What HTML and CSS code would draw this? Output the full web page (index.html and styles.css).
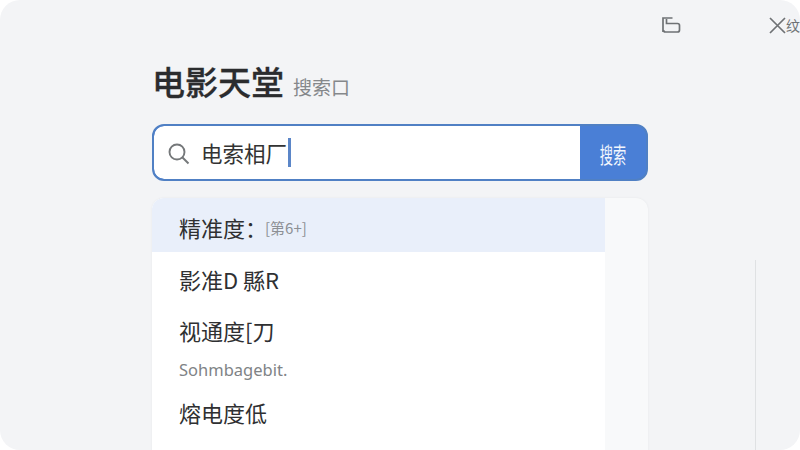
FILE: index.html
```html
<!DOCTYPE html>
<html lang="zh">
<head>
<meta charset="utf-8">
<title>电影天堂</title>
<link rel="stylesheet" href="styles.css">
</head>
<body>
<div class="window">
  <header class="topbar">
    <svg class="icon-restore" width="20" height="18" viewBox="0 0 20 18" fill="none" stroke="#6f7275" stroke-width="1.700"><path d="M2 16V2h9.500"/><path d="M5.500 3v4.500h11a2 2 0 0 1 2 2v4.500a2 2 0 0 1-2 2H4.500a2 2 0 0 1-2-2"/></svg>
    <span class="close"><svg class="close-x" width="17" height="17" viewBox="0 0 17 17" fill="none" stroke="#6f7275" stroke-width="1.700"><path d="M1 1l15 15M16 1L1 16"/></svg><span class="close-text">纹</span></span>
  </header>
  <main class="content">
    <div class="title-row">
      <h1 class="title">电影天堂</h1>
      <span class="subtitle">搜索口</span>
    </div>
    <div class="search">
      <div class="field">
        <svg class="mag" width="24" height="24" viewBox="0 0 24 24" fill="none" stroke="#75787a" stroke-width="1.900"><circle cx="10" cy="10" r="7.500"/><path d="M15.500 15.500l6 6"/></svg>
        <span class="query">电索相厂</span><span class="caret"></span>
      </div>
      <div class="btn"><span class="btn-text">搜索</span></div>
    </div>
    <div class="panel">
      <ul class="list">
        <li class="row row-active"><span class="row-text">精准度：</span><span class="row-tag">[第6+]</span></li>
        <li class="row row-b"><span class="row-text">影准D 縣R</span></li>
        <li class="row row-c"><span class="row-text">视通度[刀</span></li>
        <li class="row-note">Sohmbagebit.</li>
        <li class="row row-d"><span class="row-text">熔电度低</span></li>
      </ul>
      <div class="rail"></div>
    </div>
  </main>
  <div class="hairline"></div>
</div>
</body>
</html>
```
FILE: styles.css
```css
* { box-sizing: border-box; }
html, body { margin: 0; padding: 0; width: 800px; height: 450px; overflow: hidden; background: #ffffff; }
body { font-family: "Noto Sans CJK SC", "Noto Sans", sans-serif; color: #2b2c2e; }
.window { position: relative; width: 800px; height: 450px; background: #f3f4f6; border-radius: 20px; overflow: hidden; }
.topbar { display: flex; justify-content: flex-end; align-items: center; height: 50px; gap: 88px; }
.close { display: flex; align-items: center; width: 31px; flex: none; }
.close-x { flex: none; }
.close-text { font-size: 14px; line-height: 18px; color: #6f7275; flex: none; }
.content { width: 496px; margin-left: 152px; margin-top: 12px; }
.title-row { display: flex; align-items: baseline; gap: 9px; height: 46px; }
.title { margin: 0; font-size: 33px; font-weight: 500; line-height: 38px; color: #2b2c2e; -webkit-text-stroke: 0.3px #2b2c2e; }
.subtitle { font-size: 19px; color: #85888b; }
.search { display: flex; height: 57px; margin-top: 16px; border: 2px solid #5080c4; border-radius: 12px; background: #4a7fd6; overflow: hidden; }
.field { flex: 1; display: flex; align-items: center; background: #fff; padding-left: 13px; border-radius: 10px 0 0 10px; }
.mag { margin: 3px 10px 0 0; }
.query { font-size: 21.500px; color: #333; }
.caret { width: 3px; height: 29px; background: #5b86c8; margin-left: 1px; }
.btn { width: 66px; display: flex; align-items: center; justify-content: center; color: #f2f6fd; font-size: 22px; }
.btn-text { display: inline-block; transform: scaleX(0.6); white-space: nowrap; }
.panel { display: flex; height: 260px; margin-top: 17px; border-radius: 12px 12px 0 0; background: #f8f9fa; overflow: hidden; box-shadow: 0 0 2px #e3e5e8; }
.list { width: 453px; margin: 0; padding: 0; list-style: none; background: #fff; }
.rail { flex: 1; }
.row { display: flex; align-items: center; padding-left: 27px; height: 54px; font-size: 22px; color: #2f3032; }
.row-active { background: #e9effa; padding-top: 4px; height: 54px; }
.row-tag { font-size: 15px; color: #8d9095; margin-left: -2px; }
.row-b { padding-top: 2px; height: 52px; }
.row-c { height: 50px; padding-top: 2px; }
.row-note { padding: 3px 0 0 27px; height: 26px; line-height: 26px; font-size: 16.500px; color: #808386; font-family: "Noto Sans", sans-serif; }
.row-d { height: 63px; }
.hairline { position: absolute; left: 755px; top: 260px; width: 1px; height: 190px; background: #dfe1e3; }
```
